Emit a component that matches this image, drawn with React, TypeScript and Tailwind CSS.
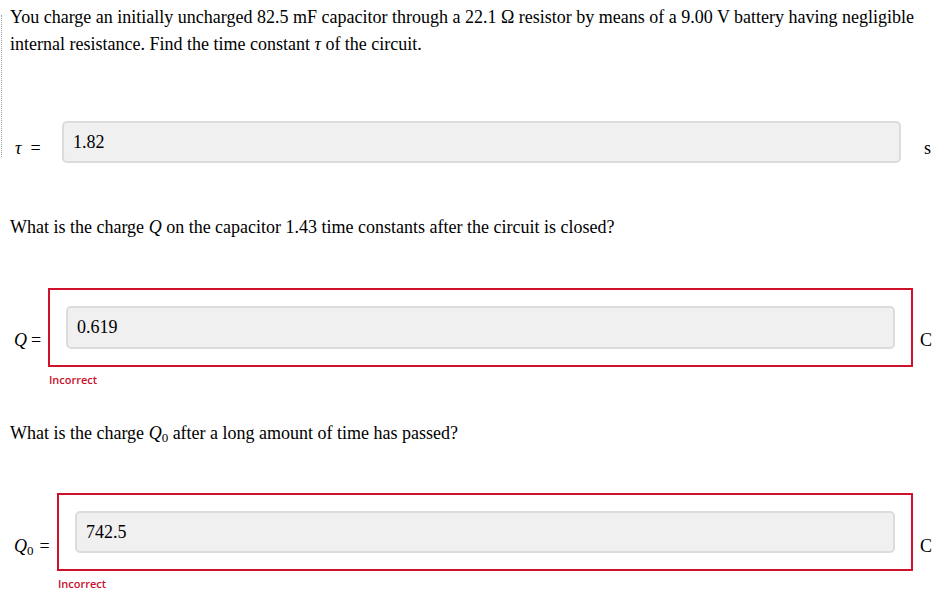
const serif = "font-['Liberation_Serif','Times_New_Roman',serif]";

function Field({ value, h = "h-[42px]" }: { value: string; h?: string }) {
  return (
    <div className={`${h} flex items-center rounded-[5px] border-2 border-[#dcdcdc] bg-[#f0f0f0] pl-[9px] text-[18px] text-black`}>
      {value}
    </div>
  );
}

function Incorrect({ left }: { left: string }) {
  return (
    <div
      className={`${left} mt-[6px] h-[14px] leading-[14px] text-[11px] font-semibold text-[#c8102e] font-['Open_Sans','Noto_Sans',sans-serif]`}
    >
      Incorrect
    </div>
  );
}

export default function App() {
  return (
    <div className={`relative w-[942px] h-[600px] bg-white text-black overflow-hidden ${serif}`}>
      <div className="absolute left-[1px] top-[15px] h-[142px] border-l border-dotted border-[#9a9a9a]" />

      <p className="pt-[4px] pl-[10px] pr-[4px] text-[18px] leading-[27px]">
        You charge an initially uncharged 82.5 mF capacitor through a 22.1 Ω resistor by means of a 9.00 V battery having negligible
        internal resistance. Find the time constant <i>τ</i> of the circuit.
      </p>

      {/* tau */}
      <div className="mt-[63px] flex items-start">
        <div className="w-[62px] pl-[15px] pt-[17px] text-[18px] leading-[20px]">
          <i>τ</i>
          <span className="ml-[9px]">=</span>
        </div>
        <div className="flex-1">
          <Field value="1.82" />
        </div>
        <div className="w-[41px] pl-[23px] pt-[17px] text-[18px] leading-[20px]">s</div>
      </div>

      <p className="mt-[51px] pl-[10px] text-[18px] leading-[27px]">
        What is the charge <i>Q</i> on the capacitor 1.43 time constants after the circuit is closed?
      </p>

      {/* Q */}
      <div className="mt-[47px] flex items-start">
        <div className="w-[48px] pl-[14px] pt-[42px] text-[18px] leading-[20px]">
          <i>Q</i>
          <span className="ml-[4px]">=</span>
        </div>
        <div className="flex-1 border-2 border-[#d0112b] p-[16px]">
          <Field value="0.619" h="h-[43px]" />
        </div>
        <div className="w-[29px] pl-[7px] pt-[42px] text-[18px] leading-[20px]">C</div>
      </div>
      <Incorrect left="pl-[49px]" />

      <p className="mt-[33px] pl-[10px] text-[18px] leading-[27px]">
        What is the charge <i>Q</i>
        <sub className="text-[13px]">0</sub> after a long amount of time has passed?
      </p>

      {/* Q0 */}
      <div className="mt-[46px] flex items-start">
        <div className="w-[57px] pl-[14px] pt-[43px] text-[18px] leading-[20px]">
          <i>Q</i>
          <sub className="text-[13px]">0</sub>
          <span className="ml-[6px]">=</span>
        </div>
        <div className="flex-1 border-2 border-[#d0112b] p-[16px]">
          <Field value="742.5" />
        </div>
        <div className="w-[29px] pl-[7px] pt-[43px] text-[18px] leading-[20px]">C</div>
      </div>
      <Incorrect left="pl-[58px]" />
    </div>
  );
}
